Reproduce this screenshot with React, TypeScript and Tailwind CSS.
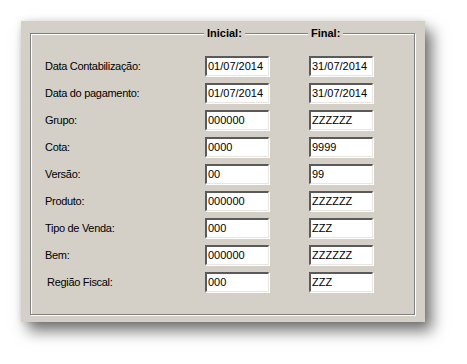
const rows = [
  { label: "Data Contabilização:", ini: "01/07/2014", fim: "31/07/2014" },
  { label: "Data do pagamento:", ini: "01/07/2014", fim: "31/07/2014" },
  { label: "Grupo:", ini: "000000", fim: "ZZZZZZ" },
  { label: "Cota:", ini: "0000", fim: "9999" },
  { label: "Versão:", ini: "00", fim: "99" },
  { label: "Produto:", ini: "000000", fim: "ZZZZZZ" },
  { label: "Tipo de Venda:", ini: "000", fim: "ZZZ" },
  { label: "Bem:", ini: "000000", fim: "ZZZZZZ" },
  { label: "Região Fiscal:", ini: "000", fim: "ZZZ", shift: true },
];

function Field({ value, w }: { value: string; w: string }) {
  return (
    <div
      className={`${w} h-[20px] bg-white border-t-2 border-l-2 border-t-[#5a5a5a] border-l-[#5a5a5a] border-r border-b border-r-[#e8e6e1] border-b-[#e8e6e1] shadow-[1px_1px_0_#fff] flex items-center pl-[1px] text-[11px] text-black leading-none`}
    >
      {value}
    </div>
  );
}

export default function App() {
  return (
    <div
      className="w-[467px] h-[364px] bg-white pt-[21px] pl-[21px]"
      style={{ fontFamily: '"Liberation Sans", Arial, sans-serif' }}
    >
      <div className="w-[404px] h-[301px] bg-[#d4d0c8] shadow-[7px_9px_14px_rgba(0,0,0,0.55),0_0_6px_rgba(0,0,0,0.12)] pt-[12px] pl-[9px]">
        <div className="relative w-[385px] h-[282px] border border-[#808080] shadow-[inset_1px_1px_0_#fff,1px_1px_0_#fff]">
          <span className="absolute left-[173px] -top-[8px] bg-[#d4d0c8] px-[3px] text-[11px] font-bold text-black leading-[14px]">
            Inicial:
          </span>
          <span className="absolute left-[277px] -top-[8px] bg-[#d4d0c8] px-[3px] text-[11px] font-bold text-black leading-[14px]">
            Final:
          </span>
          <div className="flex flex-col gap-[7px] pt-[22px] pl-[14px]">
            {rows.map((r) => (
              <div key={r.label} className="flex items-center h-[20px]">
                <div
                  className={`w-[160px] text-[11px] tracking-[-0.3px] text-black ${r.shift ? "pl-[2px]" : ""}`}
                >
                  {r.label}
                </div>
                <Field value={r.ini} w="w-[64px]" />
                <div className="w-[40px]" />
                <Field value={r.fim} w="w-[64px]" />
              </div>
            ))}
          </div>
        </div>
      </div>
    </div>
  );
}
